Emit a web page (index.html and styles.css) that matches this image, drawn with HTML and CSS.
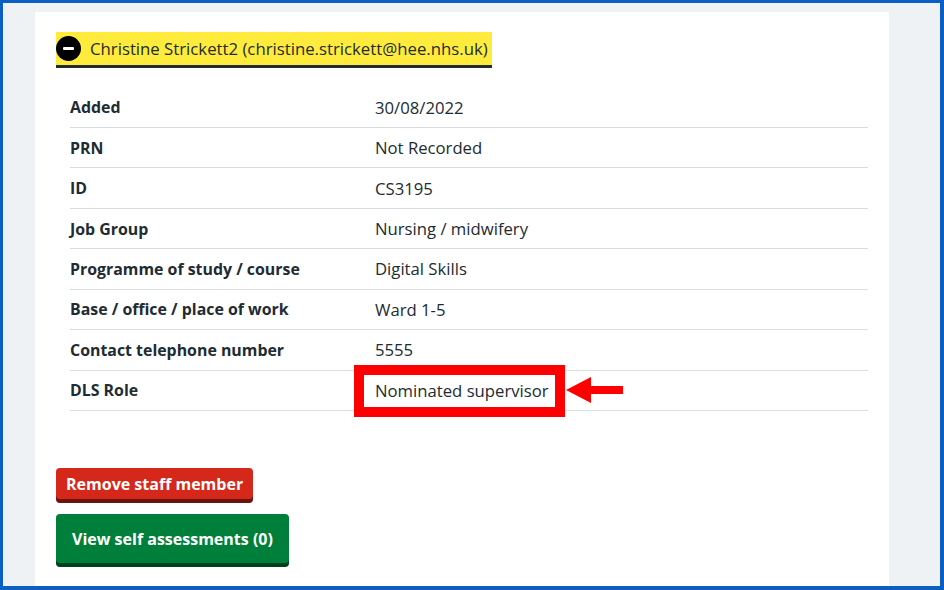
FILE: index.html
```html
<!DOCTYPE html>
<html lang="en">
<head>
<meta charset="utf-8">
<title>Staff member</title>
<link rel="stylesheet" href="styles.css">
</head>
<body>
<div class="frame">
  <div class="card">
    <div class="summary">
      <span class="summary-inner">
        <svg class="minus" width="25" height="25" viewBox="0 0 25 25" aria-hidden="true">
          <circle cx="12.5" cy="12.5" r="12.5" fill="#000"/>
          <rect x="7" y="11" width="11" height="3" rx="1" fill="#fff"/>
        </svg>
        <span class="summary-text">Christine Strickett2 (christine.strickett@hee.nhs.uk)</span>
      </span>
    </div>
    <dl class="list">
      <div class="row"><dt>Added</dt><dd>30/08/2022</dd></div>
      <div class="row"><dt>PRN</dt><dd>Not Recorded</dd></div>
      <div class="row"><dt>ID</dt><dd>CS3195</dd></div>
      <div class="row"><dt>Job Group</dt><dd>Nursing / midwifery</dd></div>
      <div class="row"><dt>Programme of study / course</dt><dd>Digital Skills</dd></div>
      <div class="row"><dt>Base / office / place of work</dt><dd>Ward 1-5</dd></div>
      <div class="row"><dt>Contact telephone number</dt><dd>5555</dd></div>
      <div class="row"><dt>DLS Role</dt><dd><span class="marked">Nominated supervisor<svg class="arrow" width="58" height="28" viewBox="0 0 58 28" aria-hidden="true"><polygon points="0,14 25,1 25,10 57,10 57,18 25,18 25,27" fill="#ff0000"/></svg></span></dd></div>
    </dl>
    <div class="actions">
      <button class="btn btn-red">Remove staff member</button>
      <button class="btn btn-green">View self assessments (0)</button>
    </div>
  </div>
</div>
</body>
</html>
```

FILE: styles.css
```css
* { box-sizing: border-box; }
html, body { margin: 0; padding: 0; }
body {
  font-family: "Open Sans", "Noto Sans", Arial, sans-serif;
  color: #212b32;
  background: #fff;
}
.frame {
  width: 944px;
  height: 590px;
  background: #eef2f4;
  border-style: solid;
  border-color: #0b5fc4;
  border-width: 3px 4px 4px 3px;
  padding: 9px 51px 0 32px;
  overflow: hidden;
}
.card {
  background: #fff;
  height: 100%;
  padding: 20px 21px 0 21px;
}
.summary {
  display: flex;
}
.summary-inner {
  display: flex;
  align-items: center;
  gap: 9px;
  background: #ffeb3b;
  height: 36px;
  padding: 0 4px 0 0;
  border-bottom: 3px solid #212b32;
}
.minus { display: block; flex: none; }
.summary-text {
  font-size: 16.75px;
  color: #212b32;
}
.list {
  margin: 19.5px 0 0 14px;
  padding: 0;
}
.row {
  display: flex;
  border-bottom: 1px solid #d8dde0;
  height: 40.45px;
  align-items: center;
}
.row dt {
  width: 305px;
  font-weight: 700;
  font-size: 15.9px;
  margin: 0;
}
.row dd {
  margin: 0;
  font-size: 16.7px;
}
.marked {
  position: relative;
  display: inline-block;
}
.marked::before {
  content: "";
  position: absolute;
  left: -21px;
  right: -16px;
  top: -14px;
  bottom: -15px;
  border: 10px solid #ff0000;
}
.arrow {
  position: absolute;
  left: calc(100% + 17px);
  top: 50%;
  transform: translateY(-50%);
  display: block;
}
.actions {
  display: flex;
  flex-direction: column;
  align-items: flex-start;
  gap: 15px;
  margin-top: 57px;
}
.btn {
  font-family: inherit;
  font-weight: 700;
  font-size: 16px;
  color: #fff;
  border: 0;
  border-radius: 4px;
  margin: 0;
}
.btn-red {
  background: #d5281b;
  box-shadow: 0 4px 0 #6b140e;
  height: 31px;
  padding: 0 10px;
}
.btn-green {
  background: #007f3b;
  box-shadow: 0 4px 0 #00401e;
  height: 49px;
  padding: 0 16px;
}
```
